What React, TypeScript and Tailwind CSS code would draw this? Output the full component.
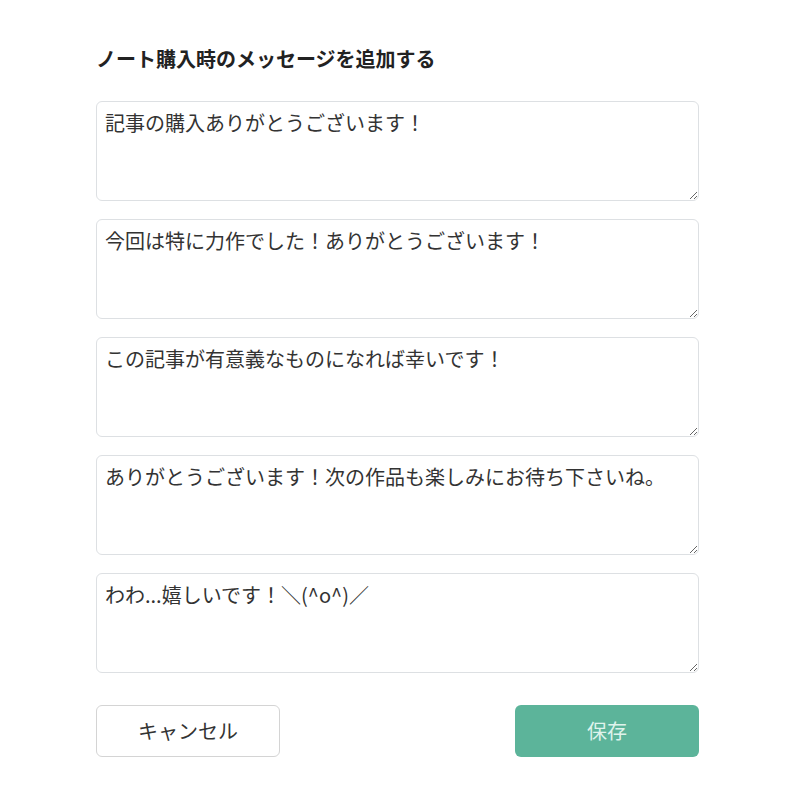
const messages = [
  '記事の購入ありがとうございます！',
  '今回は特に力作でした！ありがとうございます！',
  'この記事が有意義なものになれば幸いです！',
  'ありがとうございます！次の作品も楽しみにお待ち下さいね。',
  'わわ...嬉しいです！＼(^o^)／',
]

const font = { fontFamily: '"Noto Sans CJK JP", "Noto Sans", sans-serif' }

export default function App() {
  return (
    <div className="min-h-[800px] w-[800px] bg-white" style={font}>
      <div className="ml-[96px] w-[603px] pt-[44px]">
        <h2 className="text-[20px] font-bold leading-[30px] text-[#222]">
          ノート購入時のメッセージを追加する
        </h2>
        <div className="mt-[27px] flex flex-col gap-[18px]">
          {messages.map((m, i) => (
            <textarea
              key={i}
              defaultValue={m}
              className="block h-[100px] w-full rounded-[6px] border border-[#dde0e3] bg-white px-[8px] py-[7px] text-[20px] leading-[28px] text-[#333] outline-none"
              style={font}
            />
          ))}
        </div>
        <div className="mt-[32px] flex items-center justify-between">
          <button className="h-[52px] w-[184px] rounded-[6px] border border-[#d4d4d4] bg-white text-[20px] text-[#333]">
            キャンセル
          </button>
          <button className="h-[52px] w-[184px] rounded-[6px] bg-[#5cb49a] text-[20px] text-[#dff3ec]">
            保存
          </button>
        </div>
      </div>
    </div>
  )
}
